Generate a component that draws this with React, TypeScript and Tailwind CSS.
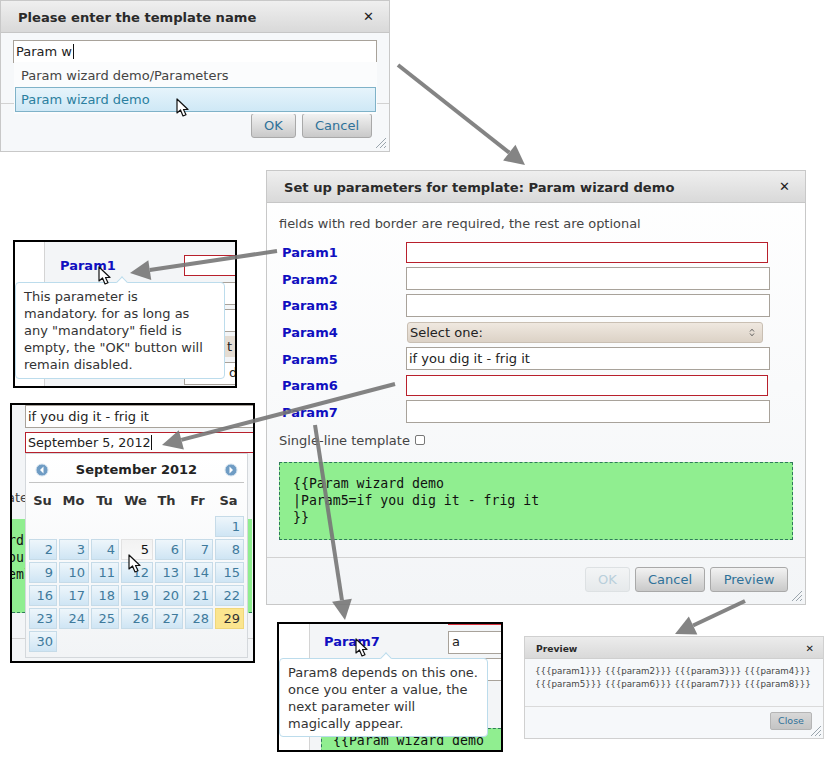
import React from "react";

const params = ["Param1", "Param2", "Param3", "Param4", "Param5", "Param6", "Param7"];

const calendarWeeks = [
  ["", "", "", "", "", "", "1"],
  ["2", "3", "4", "5", "6", "7", "8"],
  ["9", "10", "11", "12", "13", "14", "15"],
  ["16", "17", "18", "19", "20", "21", "22"],
  ["23", "24", "25", "26", "27", "28", "29"],
  ["30", "", "", "", "", "", ""],
];

const arrows = [
  { x1: 398, y1: 65, x2: 525, y2: 165 },
  { x1: 277, y1: 251, x2: 130, y2: 273 },
  { x1: 395, y1: 384, x2: 162, y2: 445 },
  { x1: 315, y1: 425, x2: 345, y2: 620 },
  { x1: 745, y1: 601, x2: 675, y2: 634 },
];

const Cursor = ({ className }: { className: string }) => (
  <svg className={`absolute z-30 ${className}`} width="14" height="20" viewBox="0 0 14 20">
    <path d="M1 1 L1 15 L4.5 12 L7 18 L10 16.8 L7.5 11.5 L12 11.5 Z" fill="#fff" stroke="#111" strokeWidth="1.2" strokeLinejoin="round" />
  </svg>
);

const CloseX = ({ small }: { small?: boolean }) => (
  <span className={`font-bold leading-none text-[#222] ${small ? "text-[10px]" : "text-[13px]"}`}>✕</span>
);

const Grip = ({ className }: { className: string }) => (
  <svg className={`absolute ${className}`} width="12" height="12" viewBox="0 0 12 12">
    <path d="M1 11 L11 1 M5 11 L11 5 M9 11 L11 9" stroke="#9aa5ad" strokeWidth="1" fill="none" />
  </svg>
);

const Btn = ({ label, width, disabled }: { label: string; width: string; disabled?: boolean }) => (
  <div
    className={`flex h-[25px] items-center justify-center rounded-[3px] border text-[13px] ${width} ${
      disabled
        ? "border-[#dde1e3] bg-gradient-to-b from-[#f3f5f6] to-[#e6e9eb] text-[#b9cfdb]"
        : "border-[#a9a9a9] bg-gradient-to-b from-[#f2f2f2] to-[#c9c9c9] text-[#2f7199]"
    }`}
  >
    {label}
  </div>
);

const TextBox = ({ value, required, width, caret }: { value?: string; required?: boolean; width?: string; caret?: boolean }) => (
  <div
    className={`flex items-center bg-white px-[2px] text-[13px] text-[#222] ${
      required ? "h-[21px] border border-[#b8202c] " + (width ?? "w-[362px]") : "h-[23px] border border-[#a8a29a] pt-px " + (width ?? "w-[364px]")
    }`}
  >
    {caret ? <span className="text-[12.7px]">{value}</span> : value}
    {caret && <span className="h-[15px] w-px bg-[#111]" />}
  </div>
);

const Tooltip = ({ lines, className }: { lines: string[]; className: string }) => (
  <div className={`absolute z-20 rounded-[4px] border border-[#bcdcec] bg-white px-2 py-[5px] text-[13px] leading-[17px] text-[#333] ${className}`}>
    <div className="absolute left-[102px] top-[-5px] h-2 w-2 rotate-45 border-l border-t border-[#bcdcec] bg-white" />
    {lines.map((l) => (
      <div key={l} className="whitespace-nowrap">
        {l}
      </div>
    ))}
  </div>
);

const ParamLabel = ({ name }: { name: string }) => <span className="text-[13px] font-bold text-[#1010c0]">{name}</span>;

const NavDot = ({ dir }: { dir: "left" | "right" }) => (
  <svg width="14" height="14" viewBox="0 0 14 14">
    <circle cx="7" cy="7" r="6" fill="#6f9cc4" stroke="#d5e3ef" />
    <path d={dir === "left" ? "M8.5 3.5 L5 7 L8.5 10.5 Z" : "M5.5 3.5 L9 7 L5.5 10.5 Z"} fill="#fff" />
  </svg>
);

const SelectArrows = () => (
  <svg width="6" height="9" viewBox="0 0 6 9">
    <path d="M1 3.5 L3 1.2 L5 3.5 M1 5.5 L3 7.8 L5 5.5" fill="none" stroke="#555" strokeWidth="0.9" />
  </svg>
);

const TemplateDialog = () => (
  <div className="absolute left-0 top-0 flex h-[152px] w-[390px] flex-col border border-[#c8c8c8] bg-[#f6f8fa]">
    <div className="flex h-[32px] shrink-0 items-center justify-between border-b border-[#c6c6c6] bg-gradient-to-b from-[#efefef] to-[#d9d9d9] pl-[17px] pr-[15px]">
      <span className="pt-[2px] text-[13.1px] font-bold text-[#2a2a2a]">Please enter the template name</span>
      <CloseX />
    </div>
    <div className="h-[70px] shrink-0 px-[12px] pt-[7px]">
      <div className="flex h-[23px] w-[364px] items-center border border-[#a8a29a] bg-white px-[2px] text-[13px] text-[#222]">
        Param w<span className="ml-px h-[15px] w-px bg-[#111]" />
      </div>
    </div>
    <div className="flex flex-1 justify-end gap-[6px] border-t border-[#d2d2d2] pr-[17px] pt-[9px]">
      <Btn label="OK" width="w-[45px]" />
      <Btn label="Cancel" width="w-[70px]" />
    </div>
    <div className="absolute left-[13px] top-[61px] z-10 flex h-[52px] w-[363px] flex-col bg-[#fbfcfd] pl-px pr-px pt-px text-[13px]">
      <div className="flex h-[24px] items-center pl-[6px] pt-[2px] text-[#444]">Param wizard demo/Parameters</div>
      <div className="flex h-[25px] items-center border border-[#7fb2c8] bg-gradient-to-b from-[#e6f4fb] to-[#cfe8f6] pl-[5px] text-[#2b7f9f]">
        Param wizard demo
      </div>
    </div>
    <Grip className="bottom-[2px] right-[2px]" />
  </div>
);

const ParametersDialog = () => (
  <div className="absolute left-[266px] top-[170px] flex h-[435px] w-[540px] flex-col border border-[#c8c8c8] bg-gradient-to-b from-white to-[#f3f5f7]">
    <div className="flex h-[32px] shrink-0 items-center justify-between border-b border-[#c6c6c6] bg-gradient-to-b from-[#efefef] to-[#d9d9d9] pl-[17px] pr-[15px]">
      <span className="pt-[2px] text-[13.1px] font-bold text-[#2a2a2a]">Set up parameters for template: Param wizard demo</span>
      <CloseX />
    </div>
    <div className="flex-1 pl-[12px] pt-[12px]">
      <div className="text-[12.95px] leading-[17px] text-[#444]">fields with red border are required, the rest are optional</div>
      <div className="mt-[7px] flex flex-col">
        {params.map((name) => (
          <div key={name} className="flex h-[26.6px] items-center">
            <div className="w-[127px] pl-[3px]">
              <ParamLabel name={name} />
            </div>
            {name === "Param4" ? (
              <div className="ml-px flex h-[21px] w-[356px] items-center justify-between rounded-[3px] border border-[#c9bfb3] bg-gradient-to-b from-[#efe8e0] to-[#dcd2c6] pl-[2px] pr-[7px] pt-px text-[13px] text-[#222]">
                Select one:
                <SelectArrows />
              </div>
            ) : (
              <TextBox required={name === "Param1" || name === "Param6"} value={name === "Param5" ? "if you dig it - frig it" : undefined} />
            )}
          </div>
        ))}
      </div>
      <div className="mt-[6.7px] flex h-[17px] items-center gap-[5px] text-[13px] text-[#444]">
        Single-line template
        <span className="h-[10px] w-[10px] rounded-[2px] border border-[#777] bg-white" />
      </div>
      <div className="mt-[13px] h-[78px] w-[514px] border border-dashed border-[#2f7a5a] bg-[#90ee90] px-[13px] py-[12px] font-['DejaVu_Sans_Mono'] text-[13.2px] leading-[17px] text-[#111]">
        <div>{"{{Param wizard demo"}</div>
        <div>|Param5=if you dig it - frig it</div>
        <div>{"}}"}</div>
      </div>
    </div>
    <div className="flex h-[47px] shrink-0 justify-end gap-[5px] border-t border-[#d2d2d2] pr-[17px] pt-[9px]">
      <Btn label="OK" width="w-[45px]" disabled />
      <Btn label="Cancel" width="w-[70px]" />
      <Btn label="Preview" width="w-[78px]" />
    </div>
    <Grip className="bottom-[2px] right-[2px]" />
  </div>
);

const PreviewDialog = () => (
  <div className="absolute left-[524px] top-[636px] flex h-[103px] w-[300px] flex-col border border-[#d0d0d0] bg-[#f6f8fa]">
    <div className="flex h-[22px] shrink-0 items-center justify-between border-b border-[#cfcfcf] bg-gradient-to-b from-[#ececec] to-[#d9d9d9] pl-[11px] pr-[9px] pt-[2px]">
      <span className="text-[9.2px] font-bold text-[#2a2a2a]">Preview</span>
      <CloseX small />
    </div>
    <div className="h-[47px] shrink-0 pl-[10px] pt-[6px] text-[8.7px] leading-[13px] text-[#444]">
      <div className="whitespace-nowrap">{"{{{param1}}} {{{param2}}} {{{param3}}} {{{param4}}}"}</div>
      <div className="whitespace-nowrap">{"{{{param5}}} {{{param6}}} {{{param7}}} {{{param8}}}"}</div>
    </div>
    <div className="flex flex-1 justify-end border-t border-[#dadada] pr-[11px] pt-[5px]">
      <div className="flex h-[18px] w-[42px] items-center justify-center rounded-[2px] border border-[#b5b5b5] bg-gradient-to-b from-[#d8d8d8] to-[#c4c4c4] text-[9.5px] text-[#2f7199]">
        Close
      </div>
    </div>
    <Grip className="bottom-[1px] right-[1px]" />
  </div>
);

const TooltipFrameOne = () => (
  <div className="absolute left-[13px] top-[240px] h-[148px] w-[224px] overflow-hidden border-2 border-black bg-white">
    <div className="absolute bottom-0 left-[29px] right-0 top-0 border-l border-[#d4d4d4] bg-[#f3f5f7]" />
    <div className="absolute left-[45px] top-[11px]">
      <ParamLabel name="Param1" />
    </div>
    <div className="absolute left-[169px] top-[13px] h-[21px] w-[80px] border border-[#b8202c] bg-white" />
    <div className="absolute left-[169px] top-[40px] h-[23px] w-[80px] border border-[#a8a29a] bg-white" />
    <div className="absolute left-[169px] top-[67px] h-[23px] w-[80px] border border-[#a8a29a] bg-white" />
    <div className="absolute left-[210px] top-[94px] h-[21px] w-[40px] bg-[#e4dcd2] pl-[2px] pt-[1px] text-[13px] text-[#222]">t c</div>
    <div className="absolute left-[169px] top-[120px] h-[23px] w-[80px] border border-[#a8a29a] bg-white" />
    <div className="absolute left-[214px] top-[122px] text-[13px] leading-[17px] text-[#222]">d</div>
    <Tooltip className="left-0 top-[40px] h-[97px] w-[210px]" lines={["This parameter is", "mandatory. for as long as", 'any "mandatory" field is', 'empty, the "OK" button will', "remain disabled."]} />
  </div>
);

const CalendarFrame = () => (
  <div className="absolute left-[10px] top-[403px] h-[260px] w-[245px] overflow-hidden border-2 border-black bg-[#f3f5f7]">
    <div className="absolute left-[13px] top-0 flex w-[240px] flex-col gap-[4px]">
      <TextBox value="if you dig it - frig it" width="w-[240px]" />
      <TextBox value="September 5, 2012" required width="w-[240px]" caret />
    </div>
    <div className="absolute left-[-5px] top-[84px] text-[13px] leading-[17px] text-[#444]">ate</div>
    <div className="absolute left-0 top-[114px] h-[94px] w-[240px] border-b border-dashed border-[#2f7a5a] bg-[#90ee90] pt-[13px] font-['DejaVu_Sans_Mono'] text-[13.2px] leading-[17px] text-[#111]">
      <div className="-ml-[4px]">rd</div>
      <div className="-ml-[4px]">ou</div>
      <div className="-ml-[4px]">eml</div>
    </div>
    <div className="absolute left-0 right-0 top-[233px] h-px bg-[#d2d2d2]" />
    <div className="absolute left-[13px] top-[48px] z-10 h-[205px] w-[223px] border border-[#d4d8dc] bg-gradient-to-b from-white to-[#f2f4f6] px-[3px] pt-[3px]">
      <div className="flex h-[26px] items-center justify-between border-b border-[#c4c4c4] px-[6px]">
        <NavDot dir="left" />
        <span className="text-[13px] font-bold text-[#222]">September 2012</span>
        <NavDot dir="right" />
      </div>
      <div className="-ml-[2px] mt-[3px] grid h-[30px] w-[217px] grid-cols-7 items-center text-center text-[13px] font-bold text-[#333]">
        {["Su", "Mo", "Tu", "We", "Th", "Fr", "Sa"].map((d) => (
          <span key={d}>{d}</span>
        ))}
      </div>
      <div className="grid grid-cols-[28px_30px_28px_32px_28px_28px_29px] gap-x-[2px] gap-y-[2px]">
        {calendarWeeks.flat().map((day, i) => {
          if (!day) return <div key={i} className="h-[21px]" />;
          const tone =
            day === "5"
              ? "border-[#e2e2e2] bg-gradient-to-b from-[#f2f2f2] to-[#f8f8f8] text-[#111]"
              : day === "29"
                ? "border-[#f0d77a] bg-[#fbe58f] text-[#333]"
                : "border-[#c6dbe8] bg-gradient-to-b from-[#eef6fb] to-[#cfe5f4] text-[#3f7a9c]";
          return (
            <div key={i} className={`flex h-[21px] items-center justify-end border pr-[3px] text-[13px] ${tone}`}>
              {day}
            </div>
          );
        })}
      </div>
    </div>
  </div>
);

const TooltipFrameTwo = () => (
  <div className="absolute left-[277px] top-[622px] h-[130px] w-[226px] overflow-hidden border-2 border-black bg-white">
    <div className="absolute bottom-0 left-[30px] right-0 top-0 border-l border-[#d4d4d4] bg-[#f3f5f7]" />
    <div className="absolute left-[169px] top-0 h-px w-[60px] bg-[#d8303c]" />
    <div className="absolute left-[45px] top-[5px]">
      <ParamLabel name="Param7" />
    </div>
    <div className="absolute left-[169px] top-[7px] h-[23px] w-[60px] border border-[#a8a29a] bg-white pl-[3px] text-[13px] leading-[20px] text-[#222]">a</div>
    <div className="absolute left-[169px] top-[34px] h-[23px] w-[60px] border border-[#a8a29a] bg-white" />
    <div className="absolute left-[42px] top-[104px] h-[30px] w-[190px] border-l border-t border-dashed border-[#2f7a5a] bg-[#90ee90] pl-[11px] pt-[3px] font-['DejaVu_Sans_Mono'] text-[13.2px] leading-[17px] text-[#111]">
      {"{{Param wizard demo"}
    </div>
    <Tooltip className="left-0 top-[34px] h-[79px] w-[209px]" lines={["Param8 depends on this one.", "once you enter a value, the", "next parameter will", "magically appear."]} />
  </div>
);

const Arrows = () => (
  <svg className="pointer-events-none absolute left-0 top-0 z-40" width="835" height="760" viewBox="0 0 835 760">
    {arrows.map((a, i) => {
      const angle = Math.atan2(a.y2 - a.y1, a.x2 - a.x1);
      const len = 20;
      const half = 10;
      const bx = a.x2 - Math.cos(angle) * len;
      const by = a.y2 - Math.sin(angle) * len;
      const nx = -Math.sin(angle) * half;
      const ny = Math.cos(angle) * half;
      return (
        <g key={i} opacity="0.9">
          <line x1={a.x1} y1={a.y1} x2={bx} y2={by} stroke="#777" strokeWidth="4" />
          <polygon points={`${a.x2},${a.y2} ${bx + nx},${by + ny} ${bx - nx},${by - ny}`} fill="#777" />
        </g>
      );
    })}
  </svg>
);

export default function App() {
  return (
    <div className="relative h-[760px] w-[835px] overflow-hidden bg-white font-['DejaVu_Sans',sans-serif]">
      <TemplateDialog />
      <ParametersDialog />
      <PreviewDialog />
      <TooltipFrameOne />
      <CalendarFrame />
      <TooltipFrameTwo />
      <Cursor className="left-[176px] top-[98px]" />
      <Cursor className="left-[98px] top-[266px]" />
      <Cursor className="left-[128px] top-[554px]" />
      <Cursor className="left-[355px] top-[638px]" />
      <Arrows />
    </div>
  );
}
